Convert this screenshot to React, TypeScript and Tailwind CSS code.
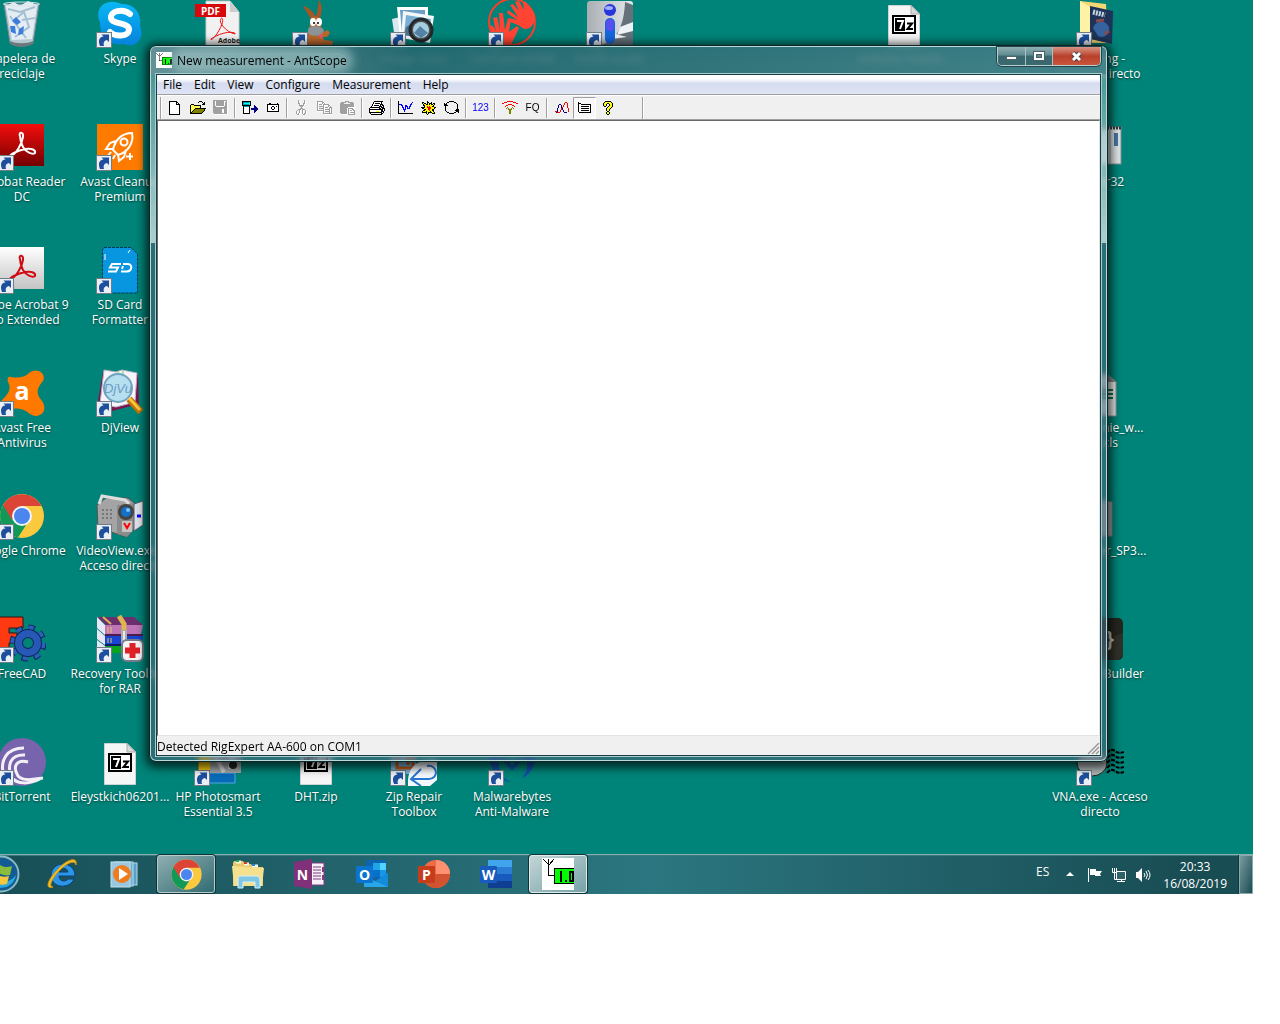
import { ReactNode } from "react";

const palette: Record<string, string> = {
  k: "#000000",
  w: "#ffffff",
  g: "#a0a0a0",
  y: "#ffff00",
  Y: "#ffff9c",
  o: "#808000",
  b: "#0000ff",
  n: "#000080",
  c: "#00ffff",
  t: "#00a0a8",
  r: "#ff0000",
  e: "#00ff00",
};

interface BitmapProps {
  rows: string[]
}

function Bitmap({ rows }: BitmapProps) {
  const width = rows[0].length;

  return (
    <svg width={width} height={rows.length} viewBox={`0 0 ${width} ${rows.length}`} shapeRendering="crispEdges" aria-hidden="true">
      {rows.map((row, y) =>
        row.split("").map((cell, x) =>
          palette[cell] ? <rect key={`${x}-${y}`} x={x} y={y} width="1" height="1" fill={palette[cell]} /> : null
        )
      )}
    </svg>
  )
}

const bitmaps = {
  new: [
    "kkkkkkkk...",
    "kwwwwwwkk..",
    "kwwwwwwkwk.",
    "kwwwwwwkkkk",
    "kwwwwwwwwwk",
    "kwwwwwwwwwk",
    "kwwwwwwwwwk",
    "kwwwwwwwwwk",
    "kwwwwwwwwwk",
    "kwwwwwwwwwk",
    "kwwwwwwwwwk",
    "kwwwwwwwwwk",
    "kwwwwwwwwwk",
    "kkkkkkkkkkk",
  ],
  open: [
    ".........kkk....",
    "........k...k.k.",
    ".............kk.",
    ".kkk........kkk.",
    "kyYykkkkkkk.....",
    "kYyYyYyYyYk.....",
    "kyYyYyYyYyk.....",
    "kYyYykkkkkkkkkkk",
    "kyYykoooooooook.",
    "kYykooooooooook.",
    "kykooooooooook..",
    "kkooooooooook...",
    "kkkkkkkkkkkk....",
  ],
  save: [
    "gggggggggggggg.",
    "ggwggggggggw.gw",
    "ggwggggggggwggw",
    "ggwggggggggwggw",
    "ggwggggggggwggw",
    "ggwggggggggwggw",
    "gggwwwwwwwwgggw",
    "ggggggggggggggw",
    "ggggggggggggggw",
    "gggggggggwwgggw",
    "gggggggggwwgggw",
    "gggggggggwwgggw",
    "gggggggggwwgggw",
    ".gggggggggggggw",
    "..wwwwwwwwwwwww",
  ],
  device: [
    "kkkkkkkkk.......",
    "kttttttck.......",
    "ktcccccck.......",
    "kttttttck.......",
    "kkkkkkkkk...n...",
    ".ktttttk....nn..",
    ".kwwwwwk....nnn.",
    ".kwwwwwk.nnnnnnn",
    ".kwwwwwk.nnnnnnn",
    ".kwwwwwk....nnn.",
    ".kwwwwwk....nn..",
    ".kwwwwwk....n...",
    ".kkkkkkk........",
  ],
  camera: [
    "..kk......k.",
    "kkkkkkkkkkkk",
    "kwwwwwwwwwwk",
    "kwwwwkkwwkwk",
    "kwwwkwwkwwwk",
    "kwwwkwwkwwwk",
    "kwwwwkkwwwwk",
    "kwwwwwwwwwwk",
    "kkkkkkkkkkkk",
  ],
  cut: [
    "..g.....g..",
    "..gw....gw.",
    "..gw....gw.",
    "..ggw..ggw.",
    "...gw..gw..",
    "...gggggw..",
    "....gggw...",
    ".....gw....",
    "....ggg....",
    "..ggg.ggg..",
    ".gwgw.gwwg.",
    "gw.gw.gw.gw",
    "gw.gw.gw.gw",
    "gwgww.gwggw",
    ".ggw...ggw.",
  ],
  copy: [
    "ggggggw........",
    "gwwwwggw.......",
    "gw...gwgw......",
    "gwgggwggggggw..",
    "gw...wgwwwwggw.",
    "gwgggggw...gwg.",
    "gw....gwgggwggg",
    "gwgggggw....gwg",
    "gw....gwgggggwg",
    "gggggggw....gwg",
    "wwwwwwgwgggggwg",
    "......gw....gwg",
    "......ggggggggg",
    ".......wwwwwwww",
  ],
  paste: [
    ".....gggg......",
    ".ggggg..ggggg..",
    "gggg......gggg.",
    "ggggggggggggggw",
    "ggggggggggggggw",
    "ggggggggggggggw",
    "ggggggggwwwwwww",
    "gggggggwgggggw.",
    "gggggggwgwwwggw",
    "gggggggwgwggwgg",
    "gggggggwgwwwwwg",
    "gggggggwgwggggg",
    ".ggggggwgwwwwwg",
    "..wwwwwwggggggg",
  ],
  print: [
    ".....kkkkkkkkk..",
    "....kwwwwwwwk...",
    "....kwkkkkkwk...",
    "...kwwwwwwwkkk..",
    "...kwkkkkkwk.kk.",
    "..kwwwwwwwkkk.k.",
    ".kkkkkkkkkk.kkk.",
    "kwwwwwwwwwkk.kkk",
    "kkkkkkkkkkkkkkwk",
    "kwwwwwwwwwwwkkwk",
    "kwwwwwwyyywwkkk.",
    "kkkkkkkkkkkkkwk.",
    ".kwwwwwwwwwwkk..",
    "..kkkkkkkkkkk...",
  ],
  graph: [
    "k..............",
    "k.............b",
    "k............b.",
    "kbbb........bb.",
    "k..bb..bb...b..",
    "k...b..bbb.bb..",
    "k...bb.b.b.b...",
    "k....b.b.bbb...",
    "k....bbb.......",
    "k.....b........",
    "k.....b........",
    "k..............",
    "kkkkkkkkkkkkkkk",
  ],
  burst: [
    "......k........",
    ".kk...kk..k....",
    ".kykk.kykkk.kk.",
    "..kyykkykykkyk.",
    "..kkyyyyyyyyk..",
    "...kyyryryykk..",
    "kkkkyyrrrryyykk",
    ".kkyyyyrrryyyk.",
    "...kkyyrryykk..",
    "..kkyyyyryykk..",
    ".kyyykyyykyyk..",
    ".kkkkkykkkkyyk.",
    ".....kyk...kkk.",
    "......k........",
  ],
  cycle: [
    ".....kkkkk.....",
    "...kk.....kk...",
    "k.k.........k..",
    "kkk..........k.",
    "kkkk.........k.",
    ".k...........k.",
    ".k...........k.",
    ".k...........k.",
    ".k..........kkk",
    ".k.........kkkk",
    "..k.........kkk",
    "...kk.....kk..k",
    ".....kkkkk.....",
  ],
  antenna: [
    ".....rrrrrr.....",
    "..rrr......rrr..",
    "rr............rr",
    "......rrrr......",
    "....rr....rr....",
    "...r........r...",
    ".....o....o.....",
    "....o.o..o.o....",
    "......oooo......",
    ".......oo.......",
    ".......oo.......",
    ".......oo.......",
    ".......oo.......",
  ],
  curves: [
    "..........rr..",
    ".........r..r.",
    "....nn...r..r.",
    "...n..n.r...r.",
    "...n..n.r...r.",
    "...n..nr....r.",
    "..n...rn.....r",
    "..n...rn.....r",
    "..n..r..n....r",
    "rrn..r..n....r",
    ".nrrr....nnn..",
  ],
  list: [
    "k............",
    "kkk..........",
    "kwwkkkkkkkkkk",
    "kwwwwwwwwwwwk",
    "kwwkkkkkkkkwk",
    "kwwwwwwwwwwwk",
    "kwwkkkkkkkkwk",
    "kwwwwwwwwwwwk",
    "kwwkkkkkkkkwk",
    "kwwwwwwwwwwwk",
    ".kkkkkkkkkkkk",
  ],
  help: [
    "..kkkkkk..",
    ".kyyyyyyk.",
    "kyyykkyyyk",
    "kyyk..kyyk",
    "kyyk..kyyk",
    ".kk..kyyyk",
    "....kyyyk.",
    "...kyyyk..",
    "...kyyk...",
    "...kyyk...",
    "....kk....",
    "...kyyk...",
    "...kyyk...",
    "....kk....",
  ],
}

interface ToolProps {
  label: string
  icon?: string[]
  text?: ReactNode
  disabled?: boolean
  pressed?: boolean
}

const toolGroups: ToolProps[][] = [
  [
    { label: "New", icon: bitmaps.new },
    { label: "Open", icon: bitmaps.open },
    { label: "Save", icon: bitmaps.save, disabled: true },
  ],
  [
    { label: "Read from device", icon: bitmaps.device },
    { label: "Screenshot", icon: bitmaps.camera },
  ],
  [
    { label: "Cut", icon: bitmaps.cut, disabled: true },
    { label: "Copy", icon: bitmaps.copy, disabled: true },
    { label: "Paste", icon: bitmaps.paste, disabled: true },
  ],
  [{ label: "Print", icon: bitmaps.print }],
  [
    { label: "Graph", icon: bitmaps.graph },
    { label: "Measure", icon: bitmaps.burst },
    { label: "Continuous", icon: bitmaps.cycle },
  ],
  [{ label: "Data", text: <span className="font-['Liberation_Sans',sans-serif] text-[10px] text-[#0000ff]">123</span> }],
  [
    { label: "Antenna", icon: bitmaps.antenna },
    { label: "Frequency", text: <span className="font-['Liberation_Sans',sans-serif] text-[10px] text-black">FQ</span> },
  ],
  [
    { label: "Curves", icon: bitmaps.curves },
    { label: "List", icon: bitmaps.list, pressed: true },
    { label: "Help", icon: bitmaps.help },
  ],
];

function ToolButton({ label, icon, text, disabled, pressed }: ToolProps) {
  return (
    <button
      type="button"
      aria-label={label}
      disabled={disabled}
      className={pressed
        ? "flex h-[22px] w-[23px] items-center justify-center border border-t-[#a0a0a0] border-l-[#a0a0a0] border-r-white border-b-white bg-[#f8f8f8]"
        : "flex h-[22px] w-[23px] items-center justify-center"}
    >
      {icon ? <Bitmap rows={icon} /> : text}
    </button>
  )
}

function Separator() {
  return <div className="mx-[2px] h-[20px] w-[2px] border-l border-[#a0a0a0] bg-white" />
}

interface ArtProps {
  children: ReactNode
  shortcut?: boolean
}

function Art({ children, shortcut }: ArtProps) {
  return (
    <svg width="48" height="48" viewBox="0 0 48 48" aria-hidden="true">
      {children}
      {shortcut && (
        <g>
          <rect x="0.5" y="32.5" width="15" height="15" fill="#e9eff4" stroke="#6f7d86" />
          <path d="M4 46 C1.500 40 4 36.500 7.500 36.500 L5.500 34.500 H13 V42 L11 40 C8 40.500 7 43 8 46 Z" fill="#1d4f9c" />
        </g>
      )}
    </svg>
  )
}

function ChromeLogo() {
  return (
    <>
      <circle cx="24" cy="24" r="22" fill="#fbc93d" />
      <path d="M24 24 L5 13 A22 22 0 0 0 20 45.600 L30 30 Z" fill="#119a57" />
      <path d="M5 13 A22 22 0 0 1 43.500 14 H24 L14 28 Z" fill="#dc4437" />
      <circle cx="24" cy="24" r="10" fill="#f4f4f4" />
      <circle cx="24" cy="24" r="8" fill="#4a86ee" />
    </>
  )
}

function SevenZip() {
  return (
    <Art>
      <path d="M8.500 5.500 H31 L39.500 14 V46.500 H8.500 Z" fill="#f6f6f6" stroke="#cfd3d3" />
      <path d="M31 5.500 V14 H39.500 Z" fill="#dadada" stroke="#aaaaaa" />
      <rect x="13" y="16" width="22" height="17" fill="#fff" stroke="#000" strokeWidth="2" />
      <rect x="15" y="18" width="10" height="13" />
      <path d="M17 21 H23 L20 29" fill="none" stroke="#fff" strokeWidth="2" />
      <path d="M27 23.500 H32 L27.500 29 H33" fill="none" stroke="#000" strokeWidth="2" />
    </Art>
  )
}

function Acrobat({ color }: { color: string }) {
  return (
    <path
      d="M22 13 C20 9 26 8 25 14 C24 21 18 31 12 34 C11 32 18 28 27 26 C34 25 38 27 37 30 C34 32 28 29 25 24 C23 20 22 17 22 13 Z"
      fill="none"
      stroke={color}
      strokeWidth="2"
    />
  )
}

interface DesktopItem {
  name: string
  cell: string
  art: ReactNode
}

const desktopItems: DesktopItem[] = [
  {
    name: "Papelera de\nreciclaje",
    cell: "col-start-1 row-start-1",
    art: (
      <Art>
        <path d="M6 4 L12 43 C17 47 29 47 35 43 L41 4 Z" fill="#b5c9d2" stroke="#738890" />
        <path d="M8 6 L16 2 L22 6 L30 1 L39 5 L34 39 L14 40 Z" fill="#e4edf3" />
        <path d="M10 9 L22 12 L37 7 M15 21 L26 12 L31 27 L17 37 M12 16 L28 38 M24 20 L37 18" stroke="#a6bfd1" strokeWidth="2" fill="none" />
        <path d="M14 21 L18 17 L23 22 L19 25 Z M12 26 L17 26 L18 34 L13 32 Z M21 29 L26 26 L25 34 L20 35 Z" fill="#3c7edb" />
        <path d="M12 41 C18 44 29 44 35 41 V44 C28 48 18 48 12 44 Z" fill="#6c787d" />
        <ellipse cx="23.500" cy="4" rx="18" ry="2" fill="none" stroke="#dbe5e8" />
      </Art>
    ),
  },
  {
    name: "Acrobat Reader\nDC",
    cell: "col-start-1 row-start-2",
    art: (
      <Art shortcut>
        <defs><linearGradient id="reader" x2="0" y2="1"><stop stopColor="#f40d0d" /><stop offset="1" stopColor="#730000" /></linearGradient></defs>
        <rect y="1" width="46" height="42" fill="url(#reader)" />
        <Acrobat color="#ffffff" />
      </Art>
    ),
  },
  {
    name: "Adobe Acrobat 9\nPro Extended",
    cell: "col-start-1 row-start-3",
    art: (
      <Art shortcut>
        <defs><linearGradient id="acro" x2="0" y2="1"><stop stopColor="#ffffff" /><stop offset="1" stopColor="#c4c4c4" /></linearGradient></defs>
        <rect y="1" width="46" height="42" fill="url(#acro)" />
        <Acrobat color="#d20b12" />
      </Art>
    ),
  },
  {
    name: "Avast Free\nAntivirus",
    cell: "col-start-1 row-start-4",
    art: (
      <Art shortcut>
        <path d="M13 8 C20 9 26 9 31 4 C37 -2 49 3 45 12 C38 20 38 25 44 32 C51 42 41 51 32 45 C24 38 14 38 7 43 C0 45 0 36 4 31 C12 24 13 18 10 13 C9 9 10 7 13 8 Z" fill="#ff7800" />
        <text x="24" y="31" textAnchor="middle" fontFamily="Open Sans" fontWeight="700" fontSize="25" fill="#fff">a</text>
      </Art>
    ),
  },
  {
    name: "Google Chrome",
    cell: "col-start-1 row-start-5",
    art: <Art shortcut><ChromeLogo /></Art>,
  },
  {
    name: "FreeCAD",
    cell: "col-start-1 row-start-6",
    art: (
      <Art shortcut>
        <path d="M0 2 H25 V13 H11 V18 H19 V28 H11 V45 H0 Z" fill="#ff3a12" stroke="#3a1010" />
        <circle cx="30" cy="28" r="15" fill="none" stroke="#10265c" strokeWidth="7" strokeDasharray="6 5.780" />
        <circle cx="30" cy="28" r="15" fill="none" stroke="#2b60bd" strokeWidth="5" strokeDasharray="5 6.780" />
        <circle cx="30" cy="28" r="9.500" fill="#008378" stroke="#10265c" strokeWidth="9" />
        <circle cx="30" cy="28" r="9.500" fill="none" stroke="#2858b5" strokeWidth="7" />
      </Art>
    ),
  },
  {
    name: "BitTorrent",
    cell: "col-start-1 row-start-7",
    art: (
      <Art shortcut>
        <circle cx="24" cy="24" r="24" fill="#7864ad" />
        <path d="M26 10 C7 10 3 24 5 34 M27 17 C13 16 9 26 13 39 M30 24 C19 21 14 28 20 38 C26 44 37 41 45 40 M13 39 C19 47 32 46 42 41" fill="none" stroke="#f2eff7" strokeWidth="3" />
      </Art>
    ),
  },
  {
    name: "Skype",
    cell: "col-start-2 row-start-1",
    art: (
      <Art shortcut>
        <defs><linearGradient id="skype" x2="0" y2="1"><stop stopColor="#08b7f5" /><stop offset="1" stopColor="#0782dd" /></linearGradient></defs>
        <path d="M14 2 C18 1 22 3 26 4 C38 4 46 13 44 26 C49 38 40 49 28 44 C14 46 4 37 4 23 C-1 11 5 3 14 2 Z" fill="url(#skype)" />
        <path d="M34 14 C27 8 14 11 15 18 C16 25 34 22 33 30 C32 37 19 37 14 32" fill="none" stroke="#fff" strokeWidth="6" strokeLinecap="round" />
      </Art>
    ),
  },
  {
    name: "Avast Cleanup\nPremium",
    cell: "col-start-2 row-start-2",
    art: (
      <Art shortcut>
        <rect x="1" y="1" width="46" height="46" rx="1" fill="#ff7b00" />
        <path d="M17 27 C19 16 27 10 36 10 C38 20 32 29 22 32 Z M20 18 L14 20 L10 26 L17 26 M30 27 L28 34 L23 38 L22 31 M15 29 L11 34 M19 32 L17 36" fill="none" stroke="#fff" strokeWidth="2" />
        <circle cx="28" cy="19" r="3.500" fill="none" stroke="#fff" strokeWidth="2" />
        <path d="M34 30 V37 M30 33.500 H37" stroke="#fff" strokeWidth="2" />
      </Art>
    ),
  },
  {
    name: "SD Card\nFormatter",
    cell: "col-start-2 row-start-3",
    art: (
      <Art shortcut>
        <path d="M8 1.500 H35 L41.500 8 V47 H6.500 V4 Z" fill="#0796df" stroke="#053d58" strokeDasharray="3 1" />
        <path d="M9 8 V14 M34 4 L32 7" stroke="#fff" />
        <path d="M25 18 H16 L14 21.500 H22 L20 25.500 H12 M26 23 L27 20 M25 25.500 H31 C36 25 37 18.500 32 18 H27" fill="none" stroke="#fff" strokeWidth="2" />
      </Art>
    ),
  },
  {
    name: "DjView",
    cell: "col-start-2 row-start-4",
    art: (
      <Art shortcut>
        <path d="M7 2 L1 38 L16 42 L43 35 L42 5 Z" fill="#7d1450" />
        <path d="M8 1 L20 3 L26 1 L41 4 L39 33 L20 38 L4 35 Z" fill="#f7f5fa" stroke="#b9b2c5" />
        <path d="M22 2 L24 15 M27 2 L25 15" stroke="#acdca9" strokeWidth="2" />
        <circle cx="22" cy="19" r="14" fill="#b6dff0" stroke="#6ea4c0" strokeWidth="2" />
        <text x="22" y="24" textAnchor="middle" fontFamily="Liberation Sans" fontStyle="italic" fontSize="13" fill="#6f9cc4">DjVu</text>
        <path d="M33 30 L45 43" stroke="#bd7609" strokeWidth="7" />
        <path d="M33 29 L44 41" stroke="#ffc43e" strokeWidth="3" />
      </Art>
    ),
  },
  {
    name: "VideoView.exe -\nAcceso directo",
    cell: "col-start-2 row-start-5",
    art: (
      <Art shortcut>
        <path d="M1 13 L10 6 H32 L38 11 V37 L31 45 L2 36 Z" fill="#a4a4a4" stroke="#525252" />
        <path d="M21 13 L38 11 V37 L31 45 L21 42 Z" fill="#8b8b8b" />
        <path d="M3 12 L6 4 L29 8 L33 12" fill="none" stroke="#dddddd" strokeWidth="3" />
        <path d="M38 12 L47 9 V33 L38 39 Z" fill="#dce0e8" stroke="#545a69" />
        <circle cx="30" cy="20" r="8" fill="#444" />
        <circle cx="30" cy="20" r="5" fill="#1570c8" />
        <circle cx="32" cy="18" r="2" fill="#7ac6ff" />
        <rect x="26" y="29" width="10" height="11" fill="#c4c4c4" />
        <path d="M28 31 L31 36 L34 31" fill="none" stroke="#f00" strokeWidth="2" />
        <path d="M41 24 H45" stroke="#00f" strokeWidth="3" />
        <path d="M6 18 H17 M6 22 H17 M6 26 H17" stroke="#777" strokeWidth="2" strokeDasharray="2 2" />
      </Art>
    ),
  },
  {
    name: "Recovery Toolbox\nfor RAR",
    cell: "col-start-2 row-start-6",
    art: (
      <Art shortcut>
        <path d="M1 2 H38 L47 10 H10 Z" fill="#6b2f6e" />
        <path d="M9 10 H47 L45 19 H9 Z" fill="#bf74b5" />
        <path d="M9 19 H47 V21 H9 Z" fill="#4e1c50" />
        <path d="M9 21 H47 L45 29 H9 Z" fill="#1744d0" />
        <path d="M9 29 H47 V31 H9 Z" fill="#0a1c6b" />
        <path d="M9 31 H46 V38 H9 Z" fill="#08a41d" />
        <path d="M1 2 L9 10 V20 L1 13 Z M1 14 L9 21 V30 L1 24 Z M1 25 L9 31 V38 L1 33 Z" fill="#e7e7f5" />
        <path d="M7 2 L15 9" stroke="#deb650" strokeWidth="2" />
        <path d="M12 12 V18 M15 12 V18 M12 23 V28 M15 23 V28" stroke="#e8c86a" />
        <path d="M23 1 L28 9 V16" stroke="#deb650" strokeWidth="5" fill="none" />
        <path d="M28 15 V32" stroke="#a9abac" strokeWidth="6" />
        <path d="M28 16 V30" stroke="#e9e9e9" strokeWidth="2" />
        <rect x="26" y="25" width="21" height="21" rx="5" fill="#f4f4f7" stroke="#777b87" strokeWidth="2" />
        <path d="M36.500 28 V43 M29 35.500 H44" stroke="#df2027" strokeWidth="6" />
      </Art>
    ),
  },
  { name: "Eleystkich06201...", cell: "col-start-2 row-start-7", art: <SevenZip /> },
  {
    name: "",
    cell: "col-start-3 row-start-1",
    art: (
      <Art>
        <path d="M12 1 H36 L45 12 V47 H12 Z" fill="#f1f1f1" stroke="#cccccc" />
        <path d="M36 1 V12 H45 Z" fill="#cccccc" />
        <rect x="1" y="4" width="31" height="13" fill="#d7070b" />
        <text x="16.500" y="15" textAnchor="middle" fontFamily="Open Sans" fontWeight="700" fontSize="10" fill="#fff">PDF</text>
        <path d="M27 19 C24 21 31 32 41 34 C43 32 30 30 17 39 C16 42 24 35 28 24 C30 18 27 17 27 19 Z" fill="none" stroke="#e11" strokeWidth="1" />
        <text x="35" y="43" textAnchor="middle" fontFamily="Open Sans" fontWeight="700" fontSize="7" fill="#222">Adobe</text>
      </Art>
    ),
  },
  {
    name: "HP Photosmart\nEssential 3.5",
    cell: "col-start-3 row-start-7",
    art: (
      <Art shortcut>
        <rect x="4" y="5" width="13" height="30" fill="#f0c80e" stroke="#555" />
        <path d="M15 35 H41 V45 H15 Z" fill="#0869b7" stroke="#4daae0" />
        <rect x="16" y="5" width="31" height="30" fill="#9fa3a5" />
        <path d="M18 12 L30 34 M39 12 L36 31" stroke="#d4d4d4" strokeWidth="4" />
        <circle cx="39" cy="27" r="4" fill="#222" />
      </Art>
    ),
  },
  {
    name: "",
    cell: "col-start-4 row-start-1",
    art: (
      <Art shortcut>
        <path d="M20 21 L11 6 C17 7 22 12 24 18 L27 0 C31 5 30 14 27 21 Z" fill="#a55528" />
        <path d="M19 18 C24 14 30 18 29 26 L31 32 L36 30 L38 33 L35 37 L31 37 L32 40 L41 41 L40 46 H14 C13 38 17 34 17 29 Z" fill="#b9682e" />
        <path d="M16 29 C19 25 28 25 32 30 C31 36 20 38 16 33 Z" fill="#8c9296" />
        <ellipse cx="21" cy="22" rx="3" ry="4" fill="#fff" /><ellipse cx="27" cy="22" rx="3" ry="4" fill="#fff" />
        <circle cx="22" cy="23" r="1" /><circle cx="26" cy="23" r="1" />
        <path d="M26 36 L31 34 L30 39 Z" fill="#ed5369" />
      </Art>
    ),
  },
  { name: "DHT.zip", cell: "col-start-4 row-start-7", art: <SevenZip /> },
  {
    name: "Image Data",
    cell: "col-start-5 row-start-1",
    art: (
      <Art shortcut>
        <path d="M2 19 L10 17 L13 40 L5 39 Z" fill="#d9e7ef" />
        <path d="M7 7 H38 V38 H10 Z" fill="#fff" />
        <path d="M10 10 H35 V34 H12 Z" fill="#6b9fc6" />
        <path d="M13 11 L44 16 L40 43 L11 38 Z" fill="#f4f7f8" />
        <path d="M16 15 L41 19 L38 40 L14 35 Z" fill="#78afd3" />
        <path d="M16 27 L24 22 L32 26 L30 38 L14 35 Z" fill="#50728a" />
        <circle cx="31" cy="30" r="11" fill="#4e5254" stroke="#23282a" strokeWidth="3" />
        <circle cx="31" cy="30" r="8" fill="#a5cfe0" />
        <path d="M24 33 L30 26 L38 33 L31 38 Z" fill="#5583a6" />
      </Art>
    ),
  },
  {
    name: "Zip Repair\nToolbox",
    cell: "col-start-5 row-start-7",
    art: (
      <Art shortcut>
        <rect x="1" y="5" width="25" height="31" fill="#74b2da" />
        <path d="M5 8 H23 V30 H7 V15 H18 V27" fill="none" stroke="#bf5b19" strokeWidth="3" />
        <path d="M8 11 H21" stroke="#ffe06a" strokeWidth="2" />
        <path d="M18 42 C19 27 30 20 47 22 V42 L40 48 H18 Z" fill="#f4f7fb" />
        <path d="M37 28 C48 26 49 41 39 41 H22 M31 31 L21 41 L31 48" fill="none" stroke="#2476d2" strokeWidth="2" />
      </Art>
    ),
  },
  {
    name: "TomTom HOME",
    cell: "col-start-6 row-start-1",
    art: (
      <Art shortcut>
        <circle cx="24" cy="22" r="23" fill="none" stroke="#fb3d2b" strokeWidth="2" />
        <path d="M22 5 L25 4 L31 11 L27 2 L31 1 L36 10 L35 2 L38 2 L46 13 C50 25 38 34 32 26 L20 21 L21 18 L29 20 L19 13 L20 10 L30 17 Z" fill="#ff4433" />
        <path d="M2 25 L6 27 L8 32 L5 18 L9 17 L12 30 L11 13 L15 13 L17 30 L20 18 L23 20 L21 32 L29 26 L31 28 L23 45 H5 Z" fill="#ff4433" />
      </Art>
    ),
  },
  {
    name: "Malwarebytes\nAnti-Malware",
    cell: "col-start-6 row-start-7",
    art: (
      <Art shortcut>
        <path d="M1 10 L20 22 L24 28 L29 22 L47 10 C49 25 44 36 34 40 C40 32 41 25 36 20 L24 33 L12 20 C8 29 14 41 23 44 C9 44 0 30 1 10 Z" fill="#1451a4" />
      </Art>
    ),
  },
  {
    name: "Intelli-studio",
    cell: "col-start-7 row-start-1",
    art: (
      <Art shortcut>
        <defs><linearGradient id="studio"><stop stopColor="#a8aeb2" /><stop offset="1" stopColor="#e6eaed" /></linearGradient></defs>
        <rect x="1" y="1" width="46" height="45" rx="3" fill="url(#studio)" />
        <path d="M15 45 C31 40 38 26 39 2 L47 5 V46 H12 Z" fill="#66717a" />
        <path d="M34 27 L47 22 V31 L31 35 Z M29 34 L41 37 L26 39 Z" fill="#f0f3f5" />
        <circle cx="24" cy="10" r="6" fill="#2637db" />
        <ellipse cx="23" cy="8" rx="4" ry="2" fill="#a1adff" />
        <rect x="19" y="18" width="10" height="26" rx="5" fill="#1466dc" />
        <rect x="20" y="19" width="8" height="12" rx="4" fill="#5650ef" />
      </Art>
    ),
  },
  { name: "Arduino-maste...", cell: "col-start-10 row-start-1", art: <SevenZip /> },
  {
    name: "Gaming -\nAcceso directo",
    cell: "col-start-12 row-start-1",
    art: (
      <Art shortcut>
        <path d="M4 1 L30 4 L32 43 L10 43 L4 36 Z" fill="#f4d775" />
        <path d="M4 1 L14 7 V39 L4 34 Z" fill="#fff1a5" />
        <path d="M14 6 L37 11 L36 44 L14 39 Z" fill="#1e3358" />
        <path d="M17 28 C20 20 30 20 33 27 C34 34 28 39 22 36 Z" fill="#34639f" />
        <path d="M20 21 L28 20 M29 34 L33 31" stroke="#8a4a4c" strokeWidth="3" />
        <path d="M17 12 L29 15" stroke="#c6d9e2" strokeWidth="5" strokeDasharray="2 1" />
      </Art>
    ),
  },
  {
    name: "Player32",
    cell: "col-start-12 row-start-2",
    art: (
      <Art>
        <rect x="4" y="4" width="41" height="37" fill="#dce2e3" stroke="#858d8f" />
        <path d="M4 5 H45" stroke="#30393c" strokeWidth="3" strokeDasharray="2 1" />
        <path d="M34 6 V40" stroke="#a7afb0" />
        <rect x="38" y="10" width="4" height="13" fill="#4775a6" />
      </Art>
    ),
  },
  {
    name: "Symphonie_w...\nnio.xls",
    cell: "col-start-12 row-start-4",
    art: (
      <Art>
        <path d="M8 5 H31 L40 13 V47 H8 Z" fill="#e3e5e5" stroke="#8d9191" />
        <path d="M31 5 V13 H40 Z" fill="#888" />
        <path d="M18 21 H37 M18 25 H37 M18 29 H37" stroke="#16714a" strokeWidth="2" />
      </Art>
    ),
  },
  {
    name: "USBDriver_SP3...",
    cell: "col-start-12 row-start-5",
    art: <Art><path d="M8 5 L36 10 V44 L8 46 Z" fill="#a9adab" stroke="#72807c" /></Art>,
  },
  {
    name: "Arduino Builder",
    cell: "col-start-12 row-start-6",
    art: (
      <Art>
        <rect x="2" y="3" width="45" height="42" rx="5" fill="#24251f" />
        <path d="M2 35 L47 18 V40 L42 45 H5 Z" fill="#303029" />
        <text x="34" y="31" textAnchor="middle" fontFamily="Liberation Sans" fontWeight="700" fontSize="20" fill="#d0cec5">{"}"}</text>
      </Art>
    ),
  },
  {
    name: "VNA.exe - Acceso\ndirecto",
    cell: "col-start-12 row-start-7",
    art: (
      <Art shortcut>
        <ellipse cx="16" cy="25" rx="15" ry="13" fill="#aeb4b4" stroke="#222" />
        <path d="M31 15 Q35 10 39 13 T48 14 M31 20 Q35 15 39 18 T48 19 M31 25 Q35 20 39 23 T48 24 M31 30 Q35 25 39 28 T48 29 M31 35 Q35 30 39 33 T48 34" fill="none" stroke="#000" strokeWidth="2" strokeDasharray="4 1" />
      </Art>
    ),
  },
];

function Desktop() {
  return (
    <div className="-ml-[27px] grid grid-cols-[repeat(12,98px)] grid-rows-[repeat(6,123px)_116px]">
      {desktopItems.map((item) => (
        <button key={item.cell} type="button" aria-label={item.name ? undefined : "Shortcut"} className={`${item.cell} flex flex-col items-center gap-[3px] self-start`}>
          {item.art}
          <span className="text-center leading-[15px] whitespace-pre text-white [text-shadow:0_1px_2px_#003c38]">{item.name}</span>
        </button>
      ))}
    </div>
  )
}

function AntScopeLogo({ size }: { size: number }) {
  return (
    <svg width={size} height={size} viewBox="0 0 32 32" shapeRendering="crispEdges" aria-hidden="true">
      <rect width="32" height="32" fill="#fff" />
      <path d="M1 1 L7 7 L12 1 M6.500 1 V17.500 H12" fill="none" stroke="#000" strokeWidth="1" />
      <rect x="12.500" y="10.500" width="20" height="15" fill="#00ff00" stroke="#000" />
      <path d="M19 13 V24 M23 23 H25 M28 14 H31 V23 H28 Z" fill="none" stroke="#000" strokeWidth="2" />
    </svg>
  )
}

function CaptionButtons() {
  return (
    <div className="flex h-[19px] overflow-hidden rounded-b-[5px] border border-t-0 border-[#b9d0d2] shadow-[0_0_0_1px_#23454a]">
      <button type="button" aria-label="Minimize" className="flex w-[28px] items-end justify-center border-r border-[#a6c2c4] bg-linear-to-b from-[#8fb0b3] from-0% via-[#5f8c91] via-45% to-[#39686e] to-50% pb-[5px]">
        <span className="h-[4px] w-[11px] border border-[#51636b] bg-white" />
      </button>
      <button type="button" aria-label="Maximize" className="flex w-[27px] items-center justify-center border-r border-[#a6c2c4] bg-linear-to-b from-[#8fb0b3] from-0% via-[#5f8c91] via-45% to-[#39686e] to-50%">
        <svg width="12" height="10" viewBox="0 0 12 10" shapeRendering="crispEdges" aria-hidden="true">
          <rect x="0.5" y="0.5" width="11" height="9" fill="#fff" stroke="#4a5f6b" />
          <rect x="3.500" y="3.500" width="5" height="3" fill="#5f8c91" stroke="#4a5f6b" />
        </svg>
      </button>
      <button type="button" aria-label="Close" className="flex w-[47px] items-center justify-center bg-linear-to-b from-[#d79586] from-0% via-[#b8402b] via-50% to-[#c9553c]">
        <svg width="13" height="11" viewBox="0 0 13 11" aria-hidden="true">
          <path d="M3 2 L10 9 M10 2 L3 9" stroke="#4c3f4a" strokeWidth="5" />
          <path d="M3 2 L10 9 M10 2 L3 9" stroke="#fff" strokeWidth="3" />
        </svg>
      </button>
    </div>
  )
}

function AntScopeWindow() {
  const menus = ["File", "Edit", "View", "Configure", "Measurement", "Help"];

  return (
    <section className="absolute top-[45px] right-[145px] bottom-[92px] left-[149px] flex flex-col overflow-hidden rounded-[7px] border border-[#0d2628] bg-linear-to-b from-[#5f9a9e99] from-0% via-[#d5e3e4cc] via-[197px] to-[#48647899] to-[197px] px-[6px] pb-[5px] shadow-[0_2px_9px_4px_rgba(0,0,0,0.65),inset_0_0_0_1px_#b9d8da] backdrop-blur-[3px]">
      <header className="-mx-[5px] mt-px flex h-[27px] shrink-0 items-start justify-between rounded-t-[5px] bg-linear-to-r from-[#788f9999] from-0% via-[#0f4f5a99] via-[27%] to-[#3e758099] px-[5px]">
        <div className="flex h-[26px] items-center gap-[5px]">
          <AntScopeLogo size={16} />
          <h1 className="rounded-full bg-[#a9c9cc99] text-black shadow-[0_0_10px_6px_#a9c9cc99]">New measurement - AntScope</h1>
        </div>
        <CaptionButtons />
      </header>
      <div className="flex min-h-0 flex-1 flex-col border border-[#173f43] bg-[#f0f0f0] shadow-[0_0_0_1px_#a9cccf]">
        <nav className="flex h-[20px] shrink-0 items-center border-b border-[#a0a0a0] bg-linear-to-b from-white from-20% via-[#d5dcef] via-45% to-[#e0e5f5]">
          {menus.map((menu) => (
            <button key={menu} type="button" className="px-[6px] text-black">{menu}</button>
          ))}
        </nav>
        <div className="flex h-[25px] shrink-0 items-center border-t border-b border-t-white border-b-[#a0a0a0] pl-[3px]">
          <div className="mr-px h-[22px] w-[2px] border-l border-[#a0a0a0] bg-white" />
          {toolGroups.map((group, index) => (
            <div key={index} className="flex items-center">
              {index > 0 && <Separator />}
              {group.map((tool) => <ToolButton key={tool.label} {...tool} />)}
            </div>
          ))}
          <div className="ml-[23px] h-[22px] w-[2px] border-l border-[#a0a0a0] bg-white" />
        </div>
        <main className="flex-1 border border-t-[#696969] border-r-[#e3e3e3] border-b-[#e3e3e3] border-l-[#696969] bg-white" />
        <footer className="flex h-[19px] shrink-0 items-center justify-between pt-[2px] text-black">
          <span>Detected RigExpert AA-600 on COM1</span>
          <svg width="13" height="13" viewBox="0 0 13 13" className="self-end" aria-hidden="true">
            <path d="M1 12 L12 1 M5 12 L12 5 M9 12 L12 9" stroke="#9a9a9a" strokeWidth="1.500" />
          </svg>
        </footer>
      </div>
    </section>
  )
}

interface OfficeProps {
  letter: string
  color: string
  children: ReactNode
}

function OfficeLogo({ letter, color, children }: OfficeProps) {
  return (
    <svg width="34" height="32" viewBox="0 0 34 32" aria-hidden="true">
      {children}
      <rect x="1" y="8" width="17" height="17" rx="1" fill={color} />
      <text x="9.500" y="21.500" textAnchor="middle" fontFamily="Open Sans" fontWeight="700" fontSize="14" fill="#fff">{letter}</text>
    </svg>
  )
}

interface TaskProps {
  name: string
  art: ReactNode
  state?: "open" | "active"
}

const tasks: TaskProps[] = [
  {
    name: "Internet Explorer",
    art: (
      <svg width="34" height="32" viewBox="0 0 34 32" aria-hidden="true">
        <path d="M30 18 H14 C14 24 21 24 23 21 H29 C25 31 7 31 6 18 C6 2 30 2 30 18 Z M14 14 H23 C22 9 15 9 14 14 Z" fill="#2b95e6" stroke="#0d3f80" fillRule="evenodd" />
        <path d="M31 7 C33 -2 22 1 13 11 C3 21 -1 32 8 29 C3 29 7 20 15 12 C23 4 30 2 31 7 Z" fill="#f5bf27" stroke="#c79516" />
      </svg>
    ),
  },
  {
    name: "Windows Media Player",
    art: (
      <svg width="28" height="28" viewBox="0 0 28 28" aria-hidden="true">
        <rect x="9" y="3" width="18" height="22" fill="#5da0c7" stroke="#b1dbed" />
        <rect x="5" y="2" width="18" height="24" fill="#72afd0" stroke="#b1dbed" />
        <rect x="1" y="2" width="19" height="25" fill="#9ac7dd" stroke="#c1e1ee" />
        <circle cx="12" cy="14" r="9" fill="#f07c20" />
        <path d="M9 8 L18 14 L9 20 Z" fill="#fff" />
      </svg>
    ),
  },
  { name: "Google Chrome", state: "open", art: <svg width="33" height="33" viewBox="0 0 48 48" aria-hidden="true"><ChromeLogo /></svg> },
  {
    name: "Explorer",
    art: (
      <svg width="34" height="32" viewBox="0 0 34 32" aria-hidden="true">
        <path d="M3 3 H12 L14 6 H20 L22 9 H32 V28 H2 V5 Z" fill="#e7ca70" />
        <path d="M5 4 H10 M13 6 H18 M21 8 H27" stroke="#f7f5e8" strokeWidth="3" />
        <path d="M5 3 H8" stroke="#14ae42" strokeWidth="2" />
        <path d="M13 5 H16" stroke="#d74320" strokeWidth="2" />
        <path d="M21 7 H24" stroke="#1887d2" strokeWidth="2" />
        <path d="M1 8 L33 10 L31 28 H3 Z" fill="#f5e08e" />
        <path d="M7 30 V21 C7 18 9 18 11 18 H25 C28 18 29 20 29 23 V30 H24 V24 H12 V30 Z" fill="#80c6e5" stroke="#d7f3fa" />
      </svg>
    ),
  },
  {
    name: "OneNote",
    art: (
      <svg width="34" height="32" viewBox="0 0 34 32" aria-hidden="true">
        <rect x="17" y="5" width="14" height="22" fill="#f5f1f7" stroke="#833a83" />
        <path d="M20 9 H28 M20 12 H28 M20 15 H28 M20 18 H28 M20 21 H28" stroke="#833a83" />
        <path d="M30 9 V14 M30 17 V22" stroke="#833a83" strokeWidth="2" />
        <path d="M1 4 L19 1 V31 L1 28 Z" fill="#80317a" />
        <text x="9.500" y="21.500" textAnchor="middle" fontFamily="Open Sans" fontWeight="700" fontSize="14" fill="#fff">N</text>
      </svg>
    ),
  },
  {
    name: "Outlook",
    art: (
      <OfficeLogo letter="O" color="#0a74d0">
        <rect x="11" y="2" width="20" height="19" fill="#0d64b5" />
        <path d="M18 5 H25 V12 H18 Z" fill="#22a5e8" /><path d="M25 5 H31 V12 H25 Z" fill="#50d4ff" />
        <path d="M18 12 H25 V19 H18 Z" fill="#0870c6" /><path d="M25 12 H31 V19 H25 Z" fill="#1897e8" />
        <path d="M9 18 L22 24 L33 15 V29 H9 Z" fill="#29a5e9" /><path d="M33 15 L20 23 L33 29 Z" fill="#128bd8" />
      </OfficeLogo>
    ),
  },
  {
    name: "PowerPoint",
    art: (
      <OfficeLogo letter="P" color="#c43e1c">
        <circle cx="19" cy="16" r="14" fill="#ed6c47" />
        <path d="M19 2 A14 14 0 0 1 33 16 H19 Z" fill="#ff9070" /><path d="M33 16 A14 14 0 0 1 5 16 Z" fill="#d3522f" />
      </OfficeLogo>
    ),
  },
  {
    name: "Word",
    art: (
      <OfficeLogo letter="W" color="#185abd">
        <path d="M9 2 H33 V9 H9 Z" fill="#41a5ee" /><path d="M9 9 H33 V16 H9 Z" fill="#2b7cd3" />
        <path d="M9 16 H33 V23 H9 Z" fill="#185abd" /><path d="M9 23 H33 V30 H9 Z" fill="#103f91" />
      </OfficeLogo>
    ),
  },
  { name: "AntScope", state: "active", art: <AntScopeLogo size={32} /> },
];

const taskStyles = {
  idle: "mx-[2px] flex h-[38px] w-[58px] items-center justify-center",
  open: "mx-[2px] flex h-[38px] w-[58px] items-center justify-center rounded-[3px] border border-[#b7cbcd] bg-linear-to-br from-[#8fafb2] to-[#2f6c72] shadow-[0_0_0_1px_#103338]",
  active: "mx-[2px] flex h-[38px] w-[58px] items-center justify-center rounded-[3px] border border-[#e1ebeb] bg-linear-to-br from-[#c4d5d6] to-[#76a3a7] shadow-[0_0_0_1px_#103338]",
};

function Taskbar() {
  return (
    <footer className="flex h-[40px] items-start justify-between border-t border-[#86adb0] bg-linear-to-r from-[#184f57] from-0% via-[#2b7680] via-[52%] to-[#194d54] to-[95%] text-white shadow-[inset_0_1px_0_#3b7c82,0_-1px_0_#0d3c40]">
      <div className="flex items-center">
        <button type="button" aria-label="Start" className="flex w-[31px] items-center">
          <svg width="20" height="38" viewBox="0 0 20 38" aria-hidden="true">
            <circle cx="1" cy="19" r="17.500" fill="#125b93" stroke="#8bb9c5" strokeWidth="2" />
            <path d="M-12 26 C-2 38 14 33 16 20 C9 29 -2 29 -12 26 Z" fill="#29a9dc" />
            <path d="M0 10 C5 13 8 12 12 11 L10 20 C6 21 3 20 -2 18 Z" fill="#89bd3c" />
            <path d="M-3 20 C2 22 5 22 9 21 L7 29 C3 30 0 30 -5 28 Z" fill="#f9c73c" />
            <path d="M-10 10 C-5 8 -3 9 -1 10 L-3 18 H-12 Z" fill="#e75d30" />
          </svg>
        </button>
        {tasks.map((task) => (
          <button key={task.name} type="button" aria-label={task.name} className={taskStyles[task.state ?? "idle"]}>
            {task.art}
          </button>
        ))}
      </div>
      <div className="flex h-full items-center">
        <span className="mr-[17px] pb-[6px]">ES</span>
        <button type="button" aria-label="Show hidden icons" className="mr-[13px]">
          <svg width="8" height="5" viewBox="0 0 8 5" aria-hidden="true"><path d="M4 0 L8 4 H0 Z" fill="#fff" /></svg>
        </button>
        <svg width="16" height="16" viewBox="0 0 16 16" className="mr-[8px]" aria-hidden="true">
          <path d="M1.500 1 V15" stroke="#fff" strokeWidth="1" />
          <path d="M3 2 H9 V4 H15 L13 7 L14 9 H8 V8 H3 Z" fill="#fff" />
        </svg>
        <svg width="16" height="16" viewBox="0 0 16 16" className="mr-[8px]" aria-hidden="true">
          <path d="M5.500 4.500 H14.500 V12.500 H5.500 Z M10.500 12 V14 M6 14.500 H14" fill="#2d6268" stroke="#fff" />
          <path d="M1.500 1 V5.500 H5.500 V1 M3.500 1 V12.500 H6" fill="none" stroke="#fff" />
        </svg>
        <svg width="16" height="16" viewBox="0 0 16 16" className="mr-[12px]" aria-hidden="true">
          <path d="M1 5 H3 L7 1 V15 L3 11 H1 Z" fill="#fff" />
          <path d="M9 6 Q11 8 9 10 M11 4 Q14 8 11 12 M13 3 Q17 8 13 13" fill="none" stroke="#fff" />
        </svg>
        <time dateTime="2019-08-16T20:33" className="mr-[12px] text-center leading-[17px]">20:33<br />16/08/2019</time>
        <button type="button" aria-label="Show desktop" className="h-full w-[14px] border border-[#8aa9ab] bg-linear-to-br from-[#799ba0] to-[#174e54] shadow-[-1px_0_0_#0f383c]" />
      </div>
    </footer>
  )
}

export default function App() {
  return (
    <div className="min-h-screen bg-white font-['Open_Sans','Noto_Sans',sans-serif] text-[12px] leading-[15px]">
      <div className="mr-[27px] overflow-hidden">
        <div className="relative bg-[#008378]">
          <Desktop />
          <AntScopeWindow />
        </div>
        <Taskbar />
      </div>
    </div>
  )
}
